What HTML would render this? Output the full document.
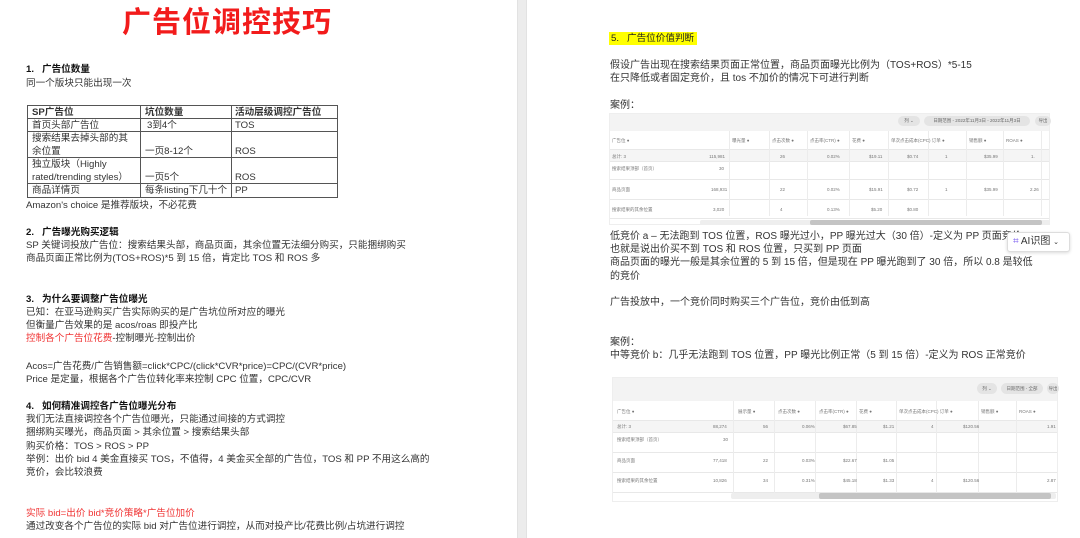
<!DOCTYPE html>
<html><head><meta charset="utf-8"><style>
*{margin:0;padding:0;box-sizing:border-box}
body{width:1080px;height:538px;background:#fff;position:relative;overflow:hidden;font-family:"Liberation Sans","Noto Sans CJK SC",sans-serif;color:#333}
.t{position:absolute;font-size:9.6px;line-height:13px;white-space:nowrap}
.b{font-weight:bold;color:#111}
.r{color:#f03535}
.g{position:absolute;left:517px;top:0;width:10px;height:538px;background:#ececec;border-left:1px solid #e2e2e2;border-right:1px solid #e2e2e2}
.wt{position:absolute;left:27px;top:105px;width:311px;height:93px;border:1px solid #555}
.wt .h{position:absolute;left:0;right:0;height:1px;background:#555}
.wt .v{position:absolute;top:0;bottom:0;width:1px;background:#555}
.wt .c{position:absolute;font-size:9.6px;line-height:13px;white-space:nowrap;color:#333}
.s{position:absolute;background:#fff;border:1px solid #eee;font-size:4.5px;color:#777}
.s .band{position:absolute;left:0;right:0;top:0;background:#f3f3f3}
.s .row{position:absolute;left:0;right:0;border-bottom:1px solid #e8e8e8}
.s .c{position:absolute;white-space:nowrap}
.s .vl{position:absolute;bottom:8px;width:1px;background:#ececec}
.s .sb{position:absolute;background:#c4c4c4;border-radius:2px}
.pill{position:absolute;background:#e4e4e4;border-radius:7px;font-size:4.5px;color:#666;text-align:center}
</style></head><body>
<div class="g"></div>

<div class="t" style="left:122px;top:5px;font-size:29px;line-height:36px;font-weight:bold;color:#f21b1b;letter-spacing:1px">广告位调控技巧</div>
<div class="t b" style="left:26px;top:63px">1.&nbsp;&nbsp; 广告位数量</div>
<div class="t" style="left:26px;top:77px">同一个版块只能出现一次</div>
<div class="wt">
<div class="h" style="top:12px"></div><div class="h" style="top:25px"></div><div class="h" style="top:51px"></div><div class="h" style="top:77px"></div>
<div class="v" style="left:112px"></div><div class="v" style="left:203px"></div>
<div class="c b" style="left:4px;top:0">SP广告位</div><div class="c b" style="left:117px;top:0">坑位数量</div><div class="c b" style="left:207px;top:0">活动层级调控广告位</div>
<div class="c" style="left:4px;top:13px">首页头部广告位</div><div class="c" style="left:119px;top:13px">3到4个</div><div class="c" style="left:207px;top:13px">TOS</div>
<div class="c" style="left:4px;top:26px">搜索结果去掉头部的其<br>余位置</div><div class="c" style="left:117px;top:39px">一页8-12个</div><div class="c" style="left:207px;top:39px">ROS</div>
<div class="c" style="left:4px;top:52px">独立版块（Highly<br>rated/trending styles）</div><div class="c" style="left:117px;top:65px">一页5个</div><div class="c" style="left:207px;top:65px">ROS</div>
<div class="c" style="left:4px;top:78px">商品详情页</div><div class="c" style="left:117px;top:78px">每条listing下几十个</div><div class="c" style="left:207px;top:78px">PP</div>
</div>
<div class="t" style="left:26px;top:199px">Amazon's choice 是推荐版块，不必花费</div>
<div class="t b" style="left:26px;top:226px">2.&nbsp;&nbsp; 广告曝光购买逻辑</div>
<div class="t" style="left:26px;top:239px">SP 关键词投放广告位：搜索结果头部，商品页面，其余位置无法细分购买，只能捆绑购买</div>
<div class="t" style="left:26px;top:252px">商品页面正常比例为(TOS+ROS)*5 到 15 倍，肯定比 TOS 和 ROS 多</div>
<div class="t b" style="left:26px;top:293px">3.&nbsp;&nbsp; 为什么要调整广告位曝光</div>
<div class="t" style="left:26px;top:306px">已知：在亚马逊购买广告实际购买的是广告坑位所对应的曝光</div>
<div class="t" style="left:26px;top:319px">但衡量广告效果的是 acos/roas 即投产比</div>
<div class="t" style="left:26px;top:332px"><span class="r">控制各个广告位花费</span>-控制曝光-控制出价</div>
<div class="t" style="left:26px;top:360px">Acos=广告花费/广告销售额=click*CPC/(click*CVR*price)=CPC/(CVR*price)</div>
<div class="t" style="left:26px;top:373px">Price 是定量，根据各个广告位转化率来控制 CPC 位置，CPC/CVR</div>
<div class="t b" style="left:26px;top:400px">4.&nbsp;&nbsp; 如何精准调控各广告位曝光分布</div>
<div class="t" style="left:26px;top:413px">我们无法直接调控各个广告位曝光，只能通过间接的方式调控</div>
<div class="t" style="left:26px;top:426px">捆绑购买曝光，商品页面 &gt; 其余位置 &gt; 搜索结果头部</div>
<div class="t" style="left:26px;top:440px">购买价格：TOS &gt; ROS &gt; PP</div>
<div class="t" style="left:26px;top:453px">举例：出价 bid 4 美金直接买 TOS，不值得，4 美金买全部的广告位，TOS 和 PP 不用这么高的</div>
<div class="t" style="left:26px;top:466px">竞价，会比较浪费</div>
<div class="t r" style="left:26px;top:507px">实际 bid=出价 bid*竞价策略*广告位加价</div>
<div class="t" style="left:26px;top:520px">通过改变各个广告位的实际 bid 对广告位进行调控，从而对投产比/花费比例/占坑进行调控</div>

<div class="t" style="left:609px;top:32px;background:#ffff00;padding:0 3px 0 2px;color:#222">5.&nbsp;&nbsp; 广告位价值判断</div>
<div class="t" style="left:610px;top:59px;font-size:10px">假设广告出现在搜索结果页面正常位置，商品页面曝光比例为（TOS+ROS）*5-15</div>
<div class="t" style="left:610px;top:72px;font-size:10px">在只降低或者固定竞价，且 tos 不加价的情况下可进行判断</div>
<div class="t" style="left:610px;top:99px;font-size:10px">案例：</div>

<div class="s" style="left:609px;top:113px;width:441px;height:112px">
<div class="band" style="height:17px"></div>
<div class="pill" style="left:288px;top:2px;width:22px;height:10px;line-height:10px">列 ⌄</div>
<div class="pill" style="left:314px;top:2px;width:106px;height:10px;line-height:10px">日期范围 - 2022年11月3日 - 2022年11月3日</div>
<div class="pill" style="left:425px;top:2px;width:16px;height:10px;line-height:10px">导出</div>
<div class="row" style="top:17px;height:19px"></div>
<div class="row" style="top:36px;height:12px;background:#f5f5f5"></div>
<div class="row" style="top:48px;height:18px"></div>
<div class="row" style="top:66px;height:20px"></div>
<div class="row" style="top:86px;height:19px"></div>
<div class="vl" style="left:119px;top:17px"></div><div class="vl" style="left:159px;top:17px"></div><div class="vl" style="left:197px;top:17px"></div><div class="vl" style="left:239px;top:17px"></div><div class="vl" style="left:278px;top:17px"></div><div class="vl" style="left:318px;top:17px"></div><div class="vl" style="left:356px;top:17px"></div><div class="vl" style="left:393px;top:17px"></div><div class="vl" style="left:431px;top:17px"></div>
<div class="c" style="left:2px;top:24px">广告位 ●</div><div class="c" style="left:122px;top:24px">曝光量 ●</div><div class="c" style="left:162px;top:24px">点击次数 ●</div><div class="c" style="left:200px;top:24px">点击率(CTR) ●</div><div class="c" style="left:242px;top:24px">花费 ●</div><div class="c" style="left:281px;top:24px">单次点击成本(CPC) 订单 ●</div><div class="c" style="left:359px;top:24px">销售额 ●</div><div class="c" style="left:396px;top:24px">ROAS ●</div>
<div class="c" style="left:2px;top:40px">总计: 3</div><div class="c" style="left:95px;top:40px;width:20px;text-align:right">115,981</div><div class="c" style="left:170px;top:40px">26</div><div class="c" style="left:217px;top:40px">0.02%</div><div class="c" style="left:259px;top:40px">$19.11</div><div class="c" style="left:297px;top:40px">$0.74</div><div class="c" style="left:335px;top:40px">1</div><div class="c" style="left:374px;top:40px">$35.99</div><div class="c" style="left:421px;top:40px">1.</div>
<div class="c" style="left:2px;top:52px">搜索结果顶部（首页）</div><div class="c" style="left:109px;top:52px">30</div>
<div class="c" style="left:2px;top:73px">商品页面</div><div class="c" style="left:101px;top:73px">168,931</div><div class="c" style="left:170px;top:73px">22</div><div class="c" style="left:217px;top:73px">0.02%</div><div class="c" style="left:259px;top:73px">$15.91</div><div class="c" style="left:297px;top:73px">$0.72</div><div class="c" style="left:335px;top:73px">1</div><div class="c" style="left:374px;top:73px">$35.99</div><div class="c" style="left:420px;top:73px">2.26</div>
<div class="c" style="left:2px;top:93px">搜索结果的其余位置</div><div class="c" style="left:103px;top:93px">3,020</div><div class="c" style="left:170px;top:93px">4</div><div class="c" style="left:217px;top:93px">0.13%</div><div class="c" style="left:261px;top:93px">$5.20</div><div class="c" style="left:297px;top:93px">$0.80</div>
<div class="sb" style="left:90px;top:106px;width:350px;height:5px;background:#eee"></div>
<div class="sb" style="left:200px;top:106px;width:232px;height:5px"></div>
</div>

<div class="t" style="left:610px;top:230px;font-size:10px">低竞价 a – 无法跑到 TOS 位置，ROS 曝光过小，PP 曝光过大（30 倍）-定义为 PP 页面竞价</div>
<div class="t" style="left:610px;top:243px;font-size:10px">也就是说出价买不到 TOS 和 ROS 位置，只买到 PP 页面</div>
<div class="t" style="left:610px;top:256px;font-size:10px">商品页面的曝光一般是其余位置的 5 到 15 倍，但是现在 PP 曝光跑到了 30 倍，所以 0.8 是较低</div>
<div class="t" style="left:610px;top:270px;font-size:10px">的竞价</div>
<div class="t" style="left:610px;top:296px;font-size:10px">广告投放中，一个竞价同时购买三个广告位，竞价由低到高</div>
<div class="t" style="left:610px;top:336px;font-size:10px">案例：</div>
<div class="t" style="left:610px;top:349px;font-size:10px">中等竞价 b：几乎无法跑到 TOS 位置，PP 曝光比例正常（5 到 15 倍）-定义为 ROS 正常竞价</div>

<div style="position:absolute;left:1007px;top:232px;width:63px;height:20px;background:#fff;border:1px solid #ddd;border-radius:3px;box-shadow:0 1px 3px rgba(0,0,0,.15);font-size:10px;line-height:18px;color:#333;padding-left:5px;white-space:nowrap"><span style="color:#7b5cf0">⌗</span> AI识图 <span style="font-size:7px">⌄</span></div>

<div class="s" style="left:612px;top:377px;width:446px;height:125px">
<div class="band" style="height:23px"></div>
<div class="pill" style="left:364px;top:5px;width:20px;height:11px;line-height:11px">列 ⌄</div>
<div class="pill" style="left:388px;top:5px;width:42px;height:11px;line-height:11px">日期范围 - 全部</div>
<div class="pill" style="left:434px;top:5px;width:12px;height:11px;line-height:11px">导出</div>
<div class="row" style="top:23px;height:20px"></div>
<div class="row" style="top:43px;height:12px;background:#f5f5f5"></div>
<div class="row" style="top:55px;height:20px"></div>
<div class="row" style="top:75px;height:20px"></div>
<div class="row" style="top:95px;height:20px"></div>
<div class="vl" style="left:120px;top:23px"></div><div class="vl" style="left:161px;top:23px"></div><div class="vl" style="left:202px;top:23px"></div><div class="vl" style="left:243px;top:23px"></div><div class="vl" style="left:283px;top:23px"></div><div class="vl" style="left:323px;top:23px"></div><div class="vl" style="left:365px;top:23px"></div><div class="vl" style="left:403px;top:23px"></div>
<div class="c" style="left:4px;top:31px">广告位 ●</div><div class="c" style="left:125px;top:31px">展示量 ●</div><div class="c" style="left:165px;top:31px">点击次数 ●</div><div class="c" style="left:206px;top:31px">点击率(CTR) ●</div><div class="c" style="left:246px;top:31px">花费 ●</div><div class="c" style="left:286px;top:31px">单次点击成本(CPC) 订单 ●</div><div class="c" style="left:368px;top:31px">销售额 ●</div><div class="c" style="left:406px;top:31px">ROAS ●</div>
<div class="c" style="left:4px;top:46px">总计: 3</div><div class="c" style="left:100px;top:46px">88,274</div><div class="c" style="left:150px;top:46px">56</div><div class="c" style="left:189px;top:46px">0.06%</div><div class="c" style="left:230px;top:46px">$67.85</div><div class="c" style="left:270px;top:46px">$1.21</div><div class="c" style="left:318px;top:46px">4</div><div class="c" style="left:350px;top:46px">$120.56</div><div class="c" style="left:434px;top:46px">1.91</div>
<div class="c" style="left:4px;top:59px">搜索结果顶部（首页）</div><div class="c" style="left:110px;top:59px">30</div>
<div class="c" style="left:4px;top:80px">商品页面</div><div class="c" style="left:100px;top:80px">77,418</div><div class="c" style="left:150px;top:80px">22</div><div class="c" style="left:189px;top:80px">0.03%</div><div class="c" style="left:230px;top:80px">$22.67</div><div class="c" style="left:270px;top:80px">$1.05</div>
<div class="c" style="left:4px;top:100px">搜索结果的其余位置</div><div class="c" style="left:100px;top:100px">10,826</div><div class="c" style="left:150px;top:100px">34</div><div class="c" style="left:189px;top:100px">0.31%</div><div class="c" style="left:230px;top:100px">$45.18</div><div class="c" style="left:270px;top:100px">$1.33</div><div class="c" style="left:318px;top:100px">4</div><div class="c" style="left:350px;top:100px">$120.56</div><div class="c" style="left:434px;top:100px">2.87</div>
<div class="sb" style="left:118px;top:115px;width:325px;height:6px;background:#eee"></div>
<div class="sb" style="left:206px;top:115px;width:232px;height:6px"></div>
</div>
</body></html>
